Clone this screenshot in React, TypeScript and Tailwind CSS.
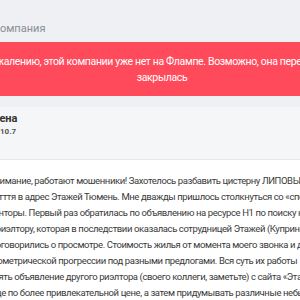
import React from "react";

const bodyLines = [
  "Внимание, работают мошенники! Захотелось разбавить цистерну ЛИПОВЫХ отзывов",
  "сотття в адрес Этажей Тюмень. Мне дважды пришлось столкнуться со «специалистами»",
  "ренторы. Первый раз обратилась по объявлению на ресурсе Н1 по поиску квартиры",
  "к риэлтору, которая в последствии оказалась сотрудницей Этажей (Куприна)",
  "Договорились о просмотре. Стоимость жилья от момента моего звонка и до",
  "геометрической прогрессии под разными предлогами. Вся суть их работы",
  "взять объявление другого риэлтора (своего коллеги, заметьте) с сайта «Этажи»",
  "еще по более привлекательной цене, а затем придумывать различные небылицы",
  "передумал, теперь цена вот такая и т.п. Но это половина дела. Уже после",
];

const App: React.FC = () => {
  return (
    <div className="w-[300px] h-[300px] overflow-hidden bg-[#eef0f3] font-['Roboto',sans-serif]">
      {/* breadcrumb */}
      <div className="h-[42px] flex items-end pb-[5px]">
        <span className="ml-[-7px] text-[11px] text-[#8a8d93] whitespace-nowrap">
          Компания
        </span>
      </div>

      {/* closed banner */}
      <div className="h-[54px] bg-[#ff4a5c] pt-[12px]">
        <p className="w-[380px] ml-[-28px] text-center text-white text-[10.5px] tracking-[-0.35px] leading-[16px] whitespace-nowrap">
          К сожалению, этой компании уже нет на Флампе. Возможно, она переехала или
          <br />
          закрылась
        </p>
      </div>

      <div className="h-[11px]" />

      {/* review card */}
      <div className="bg-white">
        <div className="h-[53px] bg-[#f5f6f8] border-b border-[#e7e9ec] pt-[4px]">
          <div className="ml-[-13px] text-[11px] font-bold text-[#333] leading-[16px] whitespace-nowrap">
            Елена
          </div>
          <div className="text-[8px] font-bold text-[#555] leading-[10px] whitespace-nowrap">
            10.7
          </div>
        </div>
        <div className="pt-[13px] ml-[-11px] text-[9.5px] tracking-[-0.4px] leading-[16px] text-[#3a3a3a]">
          {bodyLines.map((line, i) => (
            <div key={i} className="whitespace-nowrap">
              {line}
            </div>
          ))}
        </div>
      </div>
    </div>
  );
};

export default App;
